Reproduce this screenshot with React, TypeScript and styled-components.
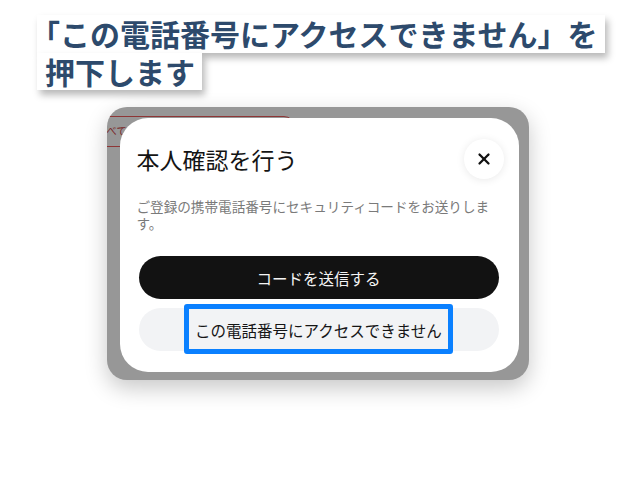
import React from "react";
import styled, { createGlobalStyle } from "styled-components";
import { X } from "lucide-react";

const GlobalStyle = createGlobalStyle`
  html, body {
    margin: 0;
    padding: 0;
    background: #ffffff;
  }
  body {
    font-family: "Noto Sans CJK JP", "Noto Sans", sans-serif;
  }
`;

const Page = styled.div`
  width: 635px;
  height: 487px;
  box-sizing: border-box;
  padding-top: 15px;
  display: flex;
  flex-direction: column;
  overflow: hidden;
`;

const Caption = styled.div`
  display: flex;
  flex-direction: column;
  align-items: flex-start;
  padding-left: 37px;
`;

const CaptionLine = styled.div`
  background: #ffffff;
  color: #2d4a6c;
  font-family: "Noto Sans CJK JP", sans-serif;
  font-weight: 700;
  font-size: 30px;
  line-height: 37px;
  height: 37.5px;
  padding: 0 7px 0 8px;
  white-space: nowrap;
  box-shadow: 3px 5px 7px rgba(0, 0, 0, 0.28);
`;

/* opening bracket at line start: drop its leading half-em blank */
const OpenBracket = styled.span`
  margin-left: -0.5em;
`;

const Shot = styled.div`
  margin: 17px auto 0;
  width: 422px;
  height: 273px;
  border-radius: 20px;
  background: #979797;
  overflow: hidden;
  display: grid;
  box-shadow: 0 8px 22px rgba(0, 0, 0, 0.22);
`;

const Backdrop = styled.div`
  grid-area: 1 / 1;
  padding-top: 9px;
`;

const FilterPill = styled.div`
  margin-left: -40px;
  width: 228px;
  height: 31px;
  box-sizing: border-box;
  border: 1px solid #8e3636;
  border-radius: 0 11px 11px 0;
  display: flex;
  align-items: center;
  padding-left: 29px;
  color: #7a2a2a;
  font-size: 10.5px;
  line-height: 1;
`;

const Dialog = styled.div`
  grid-area: 1 / 1;
  position: relative;
  margin: 11px 10px 8px 13px;
  background: #ffffff;
  border-radius: 28px;
  display: flex;
  flex-direction: column;
`;

const Header = styled.div`
  display: flex;
  align-items: center;
  justify-content: space-between;
  padding: 21px 15px 0 17px;
`;

const Title = styled.h2`
  margin: 0;
  font-size: 23px;
  font-weight: 400;
  color: #141414;
  line-height: 40px;
`;

const CloseButton = styled.button`
  width: 40px;
  height: 40px;
  border-radius: 50%;
  border: none;
  background: #ffffff;
  box-shadow: 0 1px 8px rgba(0, 0, 0, 0.09);
  display: flex;
  align-items: center;
  justify-content: center;
  padding: 0;
  color: #111111;
`;

const Description = styled.p`
  margin: 19px 0 0;
  padding: 0 16px 0 17px;
  font-size: 13.6px;
  line-height: 17px;
  color: #7a7a7a;
`;

const Actions = styled.div`
  display: flex;
  flex-direction: column;
  gap: 9px;
  margin: 24px 20px 0 19px;
`;

const PillButton = styled.button<{ $variant: "primary" | "secondary" }>`
  position: relative;
  height: 43px;
  border: none;
  border-radius: 22px;
  font-family: "Noto Sans CJK JP", sans-serif;
  font-size: 15.5px;
  padding: 0;
  background: ${(p) => (p.$variant === "primary" ? "#121212" : "#f2f3f5")};
  color: ${(p) => (p.$variant === "primary" ? "#f4f4f4" : "#151515")};
`;

const Highlight = styled.span`
  position: absolute;
  left: 45px;
  top: -4px;
  width: 269px;
  height: 50px;
  box-sizing: border-box;
  border: 5px solid #0a80ff;
  border-radius: 3px;
  pointer-events: none;
`;

export default function App() {
  return (
    <>
      <GlobalStyle />
      <Page>
        <Caption>
          <CaptionLine>
            <OpenBracket>「</OpenBracket>この電話番号にアクセスできません」を
          </CaptionLine>
          <CaptionLine>押下します</CaptionLine>
        </Caption>
        <Shot>
          <Backdrop>
            <FilterPill>すべて</FilterPill>
          </Backdrop>
          <Dialog>
            <Header>
              <Title>本人確認を行う</Title>
              <CloseButton aria-label="閉じる">
                <X size={18} strokeWidth={3} />
              </CloseButton>
            </Header>
            <Description>
              ご登録の携帯電話番号にセキュリティコードをお送りします。
            </Description>
            <Actions>
              <PillButton $variant="primary">コードを送信する</PillButton>
              <PillButton $variant="secondary">
                この電話番号にアクセスできません
                <Highlight />
              </PillButton>
            </Actions>
          </Dialog>
        </Shot>
      </Page>
    </>
  );
}
